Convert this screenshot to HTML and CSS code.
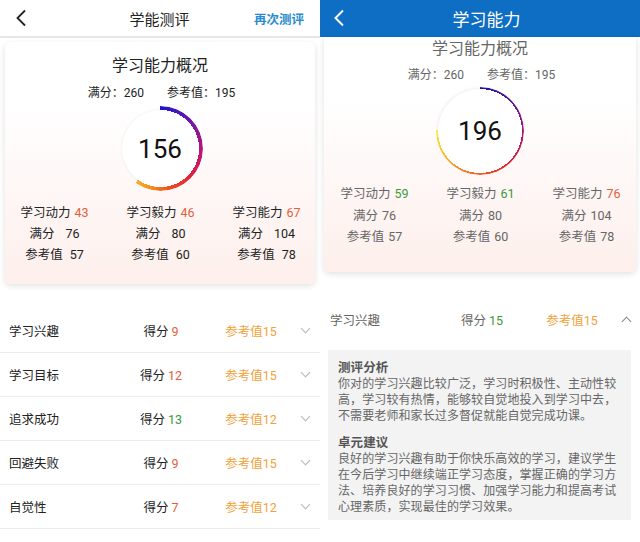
FILE: index.html
```html
<!DOCTYPE html>
<html lang="zh-CN">
<head>
  <meta charset="UTF-8"/>
  <meta name="viewport" content="width=device-width,initial-scale=1"/>
  <title>学习能力</title>
  <link rel="stylesheet" href="styles.css">
</head>
<body>

<div class="screens">

  <!-- left screen: summary + collapsed list -->
  <section class="screen screen-left">
    <header class="topbar topbar-light">
      <svg class="back" width="12" height="18" viewBox="0 0 12 18"><polyline points="10,1.5 2.5,9 10,16.5" fill="none" stroke="#222" stroke-width="1.8"/></svg>
      <h1>学能测评</h1>
      <a class="retest">再次测评</a>
    </header>

    <div class="card card-left">
      <h2>学习能力概况</h2>
      <p class="totals"><span>满分：260</span><span>参考值：195</span></p>
      <div class="ring ring-left" style="--pct: 216deg">
        <div class="ring-arc"></div>
        <div class="ring-face">156</div>
      </div>
      <div class="stats">
        <div class="stat">
          <p>学习动力<span class="num red">43</span></p>
          <p>满分<span class="num wide">76</span></p>
          <p>参考值<span class="num mid">57</span></p>
        </div>
        <div class="stat">
          <p>学习毅力<span class="num red">46</span></p>
          <p>满分<span class="num wide">80</span></p>
          <p>参考值<span class="num mid">60</span></p>
        </div>
        <div class="stat">
          <p>学习能力<span class="num red">67</span></p>
          <p>满分<span class="num wide">104</span></p>
          <p>参考值<span class="num mid">78</span></p>
        </div>
      </div>
    </div>

    <ul class="items">
      <li class="item"><span class="name">学习兴趣</span><span class="score">得分 <b class="red">9</b></span><span class="ref">参考值15</span><span class="chev down"></span></li>
      <li class="item"><span class="name">学习目标</span><span class="score">得分 <b class="red">12</b></span><span class="ref">参考值15</span><span class="chev down"></span></li>
      <li class="item"><span class="name">追求成功</span><span class="score">得分 <b class="green">13</b></span><span class="ref">参考值12</span><span class="chev down"></span></li>
      <li class="item"><span class="name">回避失败</span><span class="score">得分 <b class="red">9</b></span><span class="ref">参考值15</span><span class="chev down"></span></li>
      <li class="item"><span class="name">自觉性</span><span class="score">得分 <b class="red">7</b></span><span class="ref">参考值12</span><span class="chev down"></span></li>
    </ul>
  </section>

  <!-- right screen: scrolled, first item expanded -->
  <section class="screen screen-right">
    <header class="topbar topbar-blue">
      <svg class="back" width="12" height="18" viewBox="0 0 12 18"><polyline points="10,1.5 2.5,9 10,16.5" fill="none" stroke="#fff" stroke-width="2"/></svg>
      <h1>学习能力</h1>
      <span></span>
    </header>

    <div class="card card-right">
      <h2>学习能力概况</h2>
      <p class="totals"><span>满分：260</span><span>参考值：195</span></p>
      <div class="ring ring-right" style="--pct: 271deg">
        <div class="ring-arc"></div>
        <div class="ring-face">196</div>
      </div>
      <div class="stats">
        <div class="stat">
          <p>学习动力<span class="num green">59</span></p>
          <p>满分<span class="num">76</span></p>
          <p>参考值<span class="num">57</span></p>
        </div>
        <div class="stat">
          <p>学习毅力<span class="num green">61</span></p>
          <p>满分<span class="num">80</span></p>
          <p>参考值<span class="num">60</span></p>
        </div>
        <div class="stat">
          <p>学习能力<span class="num red">76</span></p>
          <p>满分<span class="num">104</span></p>
          <p>参考值<span class="num">78</span></p>
        </div>
      </div>
    </div>

    <div class="item item-open">
      <span class="name">学习兴趣</span><span class="score">得分 <b class="green">15</b></span><span class="ref">参考值15</span><span class="chev up"></span>
    </div>
    <div class="detail">
      <h3>测评分析</h3>
      <p>你对的学习兴趣比较广泛，学习时积极性、主动性较高，学习较有热情，能够较自觉地投入到学习中去，不需要老师和家长过多督促就能自觉完成功课。</p>
      <h3 class="second">卓元建议</h3>
      <p>良好的学习兴趣有助于你快乐高效的学习，建议学生在今后学习中继续端正学习态度，掌握正确的学习方法、培养良好的学习习惯、加强学习能力和提高考试心理素质，实现最佳的学习效果。</p>
    </div>
  </section>

</div>

</body>
</html>
```

FILE: styles.css
```css
* {
  box-sizing: border-box;
}
body {
  margin: 0;
  font-family: Roboto, "Noto Sans CJK SC", sans-serif;
  background: #fff;
  color: #222;
}
h1, h2, h3, p, ul {
  margin: 0;
  padding: 0;
}

.screens {
  display: grid;
  grid-template-columns: 320px 320px;
  height: 542px;
  overflow: hidden;
}
.screen {
  overflow: hidden;
}

/* top bars */
.topbar {
  display: grid;
  grid-template-columns: 1fr auto 1fr;
  align-items: center;
}
.topbar h1 {
  font-weight: 400;
}
.topbar-light {
  height: 38px;
  padding: 0 16px 0 15px;
  border-bottom: 2px solid #e6e6e6;
}
.topbar-light h1 {
  font-size: 15px;
  color: #222;
}
.retest {
  justify-self: end;
  font-size: 12.5px;
  font-weight: 700;
  color: #2a8ccc;
}
.topbar-blue {
  height: 37px;
  padding: 0 0 0 333px;
  padding-left: 13px;
  background: #0e6ec4;
  color: #fff;
}
.topbar-blue h1 {
  font-size: 17px;
  color: #fff;
}
.topbar-blue .back {
  margin-top: -2px;
}

/* summary card */
.card {
  background: linear-gradient(#fff 25%, #fdefec);
  box-shadow: 0 2px 6px rgba(0, 0, 0, 0.12);
  text-align: center;
}
.card h2 {
  font-size: 16px;
  font-weight: 400;
  line-height: 24px;
}
.totals {
  display: flex;
  justify-content: center;
  gap: 23px;
  font-size: 12px;
  line-height: 18px;
}
.card-left {
  margin: 4px 5px 0;
  padding: 12px 0 19px;
  border-radius: 6px;
}
.card-left h2 {
  color: #222;
}
.card-left .totals {
  margin-top: 6px;
  color: #222;
  padding-left: 3px;
}
.card-right {
  margin: 0 4px 0;
  padding: 0 0 24px;
  border-radius: 0 0 6px 6px;
}
.card-right h2 {
  color: #666;
}
.card-right .totals {
  margin-top: 5px;
  color: #666;
  padding-left: 3px;
}

/* score ring */
.ring {
  display: grid;
  margin: 0 auto;
}
.ring > div {
  grid-area: 1 / 1;
  border-radius: 50%;
}
.ring-arc {
  -webkit-mask: radial-gradient(farthest-side, transparent calc(100% - var(--w)), #000 calc(100% - var(--w)));
  mask: radial-gradient(farthest-side, transparent calc(100% - var(--w)), #000 calc(100% - var(--w)));
}
.ring-face {
  display: flex;
  align-items: center;
  justify-content: center;
  background: #fff;
  font-size: 26px;
  color: #111;
}
.ring-left {
  --w: 4px;
  width: 85px;
  height: 85px;
  margin-top: 4px;
}
.ring-left .ring-arc {
  background: conic-gradient(#1c14d2 0deg, #6a18b0 45deg, #b41480 90deg, #e0203c 130deg, #ee4a22 165deg, #f3921f 195deg, #f6b02a var(--pct), transparent var(--pct));
}
.ring-left .ring-face {
  margin: 4px;
  box-shadow: 0 0 3px rgba(0, 0, 0, 0.08);
}
.ring-right {
  --w: 2px;
  width: 88px;
  height: 88px;
  margin-top: 3px;
}
.ring-right .ring-arc {
  background: conic-gradient(#22129c 0deg, #5c1a96 50deg, #b01c6a 100deg, #d8243c 135deg, #ec4a24 170deg, #f2862a 205deg, #f4c62c 240deg, #f2ee3a var(--pct), transparent var(--pct));
}
.ring-right .ring-face {
  margin: 2px;
  box-shadow: 0 0 4px rgba(0, 0, 0, 0.1);
}

.stats {
  display: grid;
  grid-template-columns: repeat(3, 106px);
  justify-content: center;
  font-size: 12.5px;
}
.stat p {
  line-height: 21px;
}
.num {
  margin-left: 4px;
}
.card-left .stats {
  margin-top: 11px;
  color: #222;
  padding-left: 1px;
}
.card-left .num.wide {
  margin-left: 11px;
}
.card-left .num.mid {
  margin-left: 7px;
}
.card-right .stats {
  margin-top: 8px;
  color: #666;
  padding-left: 1px;
}
.card-right .stat p {
  line-height: 21.5px;
}

.red {
  color: #e2613a;
}
.green {
  color: #3a9a3c;
}
b {
  font-weight: 400;
}

/* list rows */
.items {
  list-style: none;
  margin-top: 25px;
}
.item {
  display: flex;
  align-items: center;
  height: 44px;
  padding-left: 9px;
  font-size: 12.5px;
  border-bottom: 1px solid #ececec;
}
.name {
  flex: 0 0 110px;
}
.score {
  flex: 0 0 84px;
  text-align: center;
}
.ref {
  flex: 0 0 96px;
  text-align: center;
  color: #f1a23a;
}
.chev {
  width: 7px;
  height: 7px;
  margin-left: 3px;
  border-right: 1px solid #b8b8b8;
  border-bottom: 1px solid #b8b8b8;
}
.chev.down {
  transform: rotate(45deg);
  margin-top: -5px;
}
.chev.up {
  transform: rotate(-135deg);
  margin-top: 4px;
  border-color: #888;
}
.item-open {
  margin-top: 26px;
  padding-left: 10px;
  border-bottom: none;
  color: #666;
}

/* expanded detail */
.detail {
  margin: 8px 9px 0 8px;
  padding: 10px 10px 5px;
  background: #f3f3f3;
  color: #666;
  font-size: 12px;
  letter-spacing: 0.1px;
  line-height: 16px;
}
.detail h3 {
  font-size: 12.5px;
  color: #555;
  font-weight: 700;
}
.detail h3.second {
  margin-top: 11px;
}
```
